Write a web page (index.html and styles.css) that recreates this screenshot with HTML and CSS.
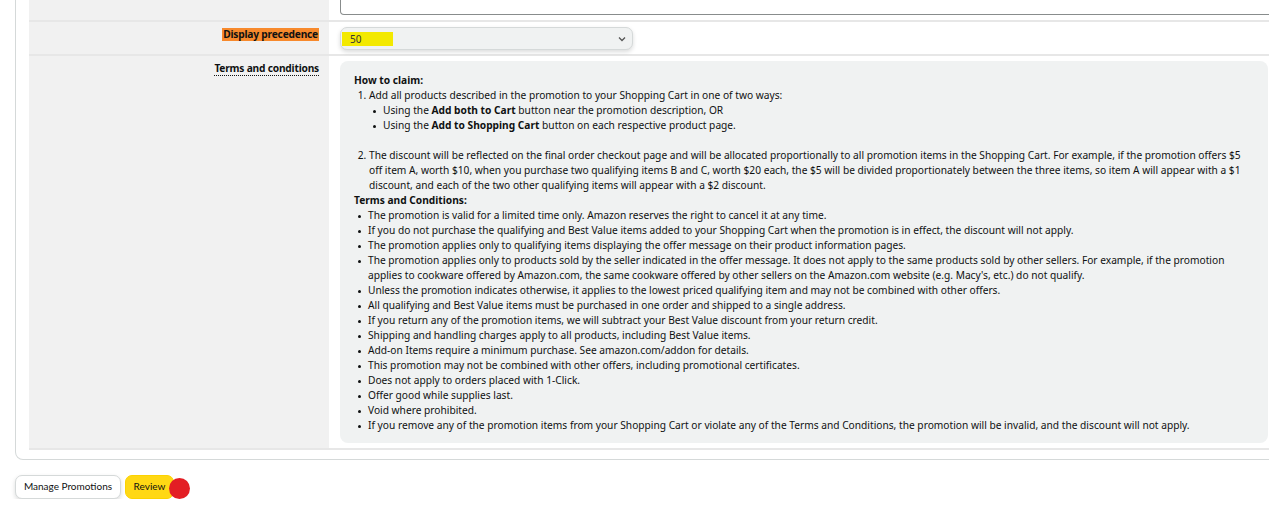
FILE: index.html
```html
<!DOCTYPE html>
<html>
<head>
<meta charset="utf-8">
<link rel="stylesheet" href="styles.css">
</head>
<body>
<div class="card">
  <div class="row row-top">
    <div class="label"></div>
    <div class="value"><div class="textarea"></div></div>
  </div>
  <div class="row row-prec">
    <div class="label"><span class="hl-orange">Display precedence</span></div>
    <div class="value">
      <div class="select">
        <span class="hl-yellow">50</span>
        <svg class="chev" width="8" height="6" viewBox="0 0 8 6"><path d="M1 1.5 L4 4.5 L7 1.5" fill="none" stroke="#555" stroke-width="1.3"/></svg>
      </div>
    </div>
  </div>
  <div class="row row-terms">
    <div class="label"><span class="dotted">Terms and conditions</span></div>
    <div class="value">
      <div class="terms">
        <div class="b">How to claim:</div>
        <ol class="steps">
          <li>Add all products described in the promotion to your Shopping Cart in one of two ways:
            <ul class="sub">
              <li>Using the <b>Add both to Cart</b> button near the promotion description, OR</li>
              <li>Using the <b>Add to Shopping Cart</b> button on each respective product page.</li>
            </ul>
            <div class="blank"></div>
          </li>
          <li>The discount will be reflected on the final order checkout page and will be allocated proportionally to all promotion items in the Shopping Cart. For example, if the promotion offers $5 off item A, worth $10, when you purchase two qualifying items B and C, worth $20 each, the $5 will be divided proportionately between the three items, so item A will appear with a $1 discount, and each of the two other qualifying items will appear with a $2 discount.</li>
        </ol>
        <div class="b">Terms and Conditions:</div>
        <ul class="tc">
          <li>The promotion is valid for a limited time only. Amazon reserves the right to cancel it at any time.</li>
          <li>If you do not purchase the qualifying and Best Value items added to your Shopping Cart when the promotion is in effect, the discount will not apply.</li>
          <li>The promotion applies only to qualifying items displaying the offer message on their product information pages.</li>
          <li>The promotion applies only to products sold by the seller indicated in the offer message. It does not apply to the same products sold by other sellers. For example, if the promotion applies to cookware offered by Amazon.com, the same cookware offered by other sellers on the Amazon.com website (e.g. Macy's, etc.) do not qualify.</li>
          <li>Unless the promotion indicates otherwise, it applies to the lowest priced qualifying item and may not be combined with other offers.</li>
          <li>All qualifying and Best Value items must be purchased in one order and shipped to a single address.</li>
          <li>If you return any of the promotion items, we will subtract your Best Value discount from your return credit.</li>
          <li>Shipping and handling charges apply to all products, including Best Value items.</li>
          <li>Add-on Items require a minimum purchase. See amazon.com/addon for details.</li>
          <li>This promotion may not be combined with other offers, including promotional certificates.</li>
          <li>Does not apply to orders placed with 1-Click.</li>
          <li>Offer good while supplies last.</li>
          <li>Void where prohibited.</li>
          <li>If you remove any of the promotion items from your Shopping Cart or violate any of the Terms and Conditions, the promotion will be invalid, and the discount will not apply.</li>
        </ul>
      </div>
    </div>
  </div>
</div>
<div class="actions">
  <button class="btn btn-white">Manage Promotions</button>
  <button class="btn btn-yellow">Review</button>
  <span class="dot"></span>
</div>
</body>
</html>
```
FILE: styles.css
```css
html, body { margin: 0; padding: 0; background: #fff; }
body {
  font-family: "Noto Sans", "Open Sans", Arial, sans-serif;
  font-size: 10.2px;
  color: #0f1111;
  width: 1269px;
  overflow: hidden;
}
.card {
  margin-left: 15px;
  width: 1280px;
  border: 1px solid #d5d9d9;
  border-top: none;
  border-radius: 0 0 8px 8px;
  padding: 0 0 9px 13px;
}
.row {
  display: grid;
  grid-template-columns: 300px 1fr;
  border-bottom: 2px solid #e7e7e7;
}
.label {
  background: #f1f1f1;
  text-align: right;
  padding-right: 10px;
  font-weight: 700;
  letter-spacing: -0.2px;
}
.value { padding-left: 11px; }
.row-top { height: 20px; }
.textarea {
  height: 14px;
  border: 1px solid #888c8c;
  border-top: none;
  border-radius: 0 0 4px 4px;
  margin-right: -20px;
}
.row-prec { height: 32px; }
.row-prec .label { padding-top: 5px; }
.hl-orange {
  background: #f7892c;
  display: inline-block;
  line-height: 13px;
  padding: 0 1px;
}
.select {
  margin-top: 5px;
  width: 284px;
  height: 21px;
  background: #f0f2f2;
  border: 1px solid #d5d9d9;
  border-radius: 7px;
  box-shadow: 0 2px 4px rgba(15,17,17,.15);
  display: flex;
  align-items: center;
  justify-content: space-between;
  padding: 0 6px 0 1px;
  box-sizing: content-box;
}
.hl-yellow {
  background: #f3e900;
  width: 43px;
  height: 14px;
  line-height: 14px;
  padding-left: 8px;
  font-size: 10px;
  color: #333;
}
.chev { margin-top: 1px; }
.row-terms .label { padding-top: 5px; }
.dotted {
  border-bottom: 1px dotted #0f1111;
  line-height: 13px;
  display: inline-block;
}
.terms {
  margin-top: 5px;
  margin-bottom: 5px;
  width: 900px;
  background: #f0f2f2;
  border-radius: 8px;
  padding: 12px 14px 10px 14px;
  line-height: 15px;
  color: #0f1111;
}
.terms .b { font-weight: 700; }
.steps {
  margin: 0;
  padding-left: 15px;
}
.sub {
  margin: 0;
  padding-left: 14px;
  list-style: none;
}
.sub li, .tc li { position: relative; }
.sub li::before, .tc li::before {
  content: "";
  position: absolute;
  width: 3px;
  height: 3px;
  background: #0f1111;
  border-radius: 50%;
  left: -10px;
  top: 7px;
}
.blank { height: 15px; }
.tc {
  margin: 0;
  padding-left: 14px;
  list-style: none;
}
.actions {
  display: flex;
  align-items: center;
  margin: 15px 0 0 15px;
}
.btn {
  font-family: "Lato", "Noto Sans", sans-serif;
  font-size: 10px;
  height: 24px;
  border-radius: 7px;
  padding: 0 0 3px;
  color: #0f1111;
  white-space: nowrap;
  cursor: pointer;
}
.btn-white {
  background: #fff;
  border: 1px solid #d5d9d9;
  box-shadow: 0 2px 4px rgba(15,17,17,.15);
  width: 106px;
}
.btn-yellow {
  margin-left: 4px;
  background: #ffd814;
  border: 1px solid #fcd200;
  width: 49px;
}
.dot {
  width: 21px;
  height: 21px;
  border-radius: 50%;
  background: #e31e24;
  margin-left: -5px;
  margin-top: 2px;
}
```
